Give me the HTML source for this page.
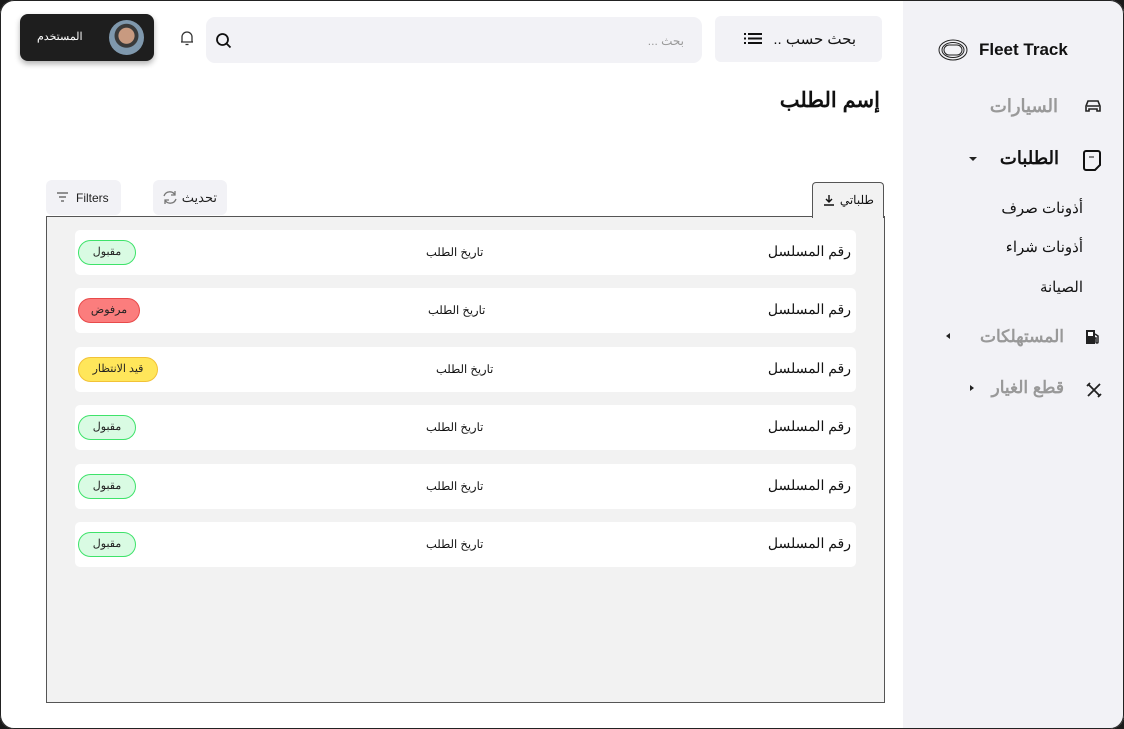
<!DOCTYPE html>
<html><head><meta charset="utf-8"><style>
*{box-sizing:border-box;margin:0;padding:0}
body{width:1124px;height:729px;background:#1a1a1a;font-family:"Liberation Sans","Noto Sans CJK SC",sans-serif;position:relative;overflow:hidden}
.frame{position:absolute;left:0;top:0;width:1124px;height:729px;background:#fff;border-radius:14px;overflow:hidden}
.edge{position:absolute;left:0;top:0;width:1124px;height:729px;border:1px solid #222;border-radius:14px;pointer-events:none;z-index:9}
.side{position:absolute;left:903px;top:0;width:221px;height:729px;background:#f2f2f6}
.abs{position:absolute}
.ar{direction:rtl;white-space:nowrap}
.row{position:absolute;left:75px;width:781px;height:45px;background:#fff;border-radius:5px}
.row .a{position:absolute;right:5px;top:13px;font-size:14px;color:#111;direction:rtl}
.row .b{position:absolute;top:15px;font-size:11.5px;color:#111;direction:rtl}
.pill{position:absolute;left:3px;top:10px;height:25px;border-radius:13px;font-size:11px;color:#222;text-align:center;line-height:23px;direction:rtl}
.g{background:#d9fbe3;border:1.5px solid #3ee36a;width:58px}
.r{background:#fb7d7d;border:1.5px solid #e84a4a;width:62px}
.y{background:#ffe65a;border:1.5px solid #f2c237;width:80px}
</style></head><body><div class="frame">
<div class="side">
 <svg class="abs" style="left:34px;top:38px" width="32" height="24" viewBox="0 0 32 24" fill="none" stroke="#222" stroke-width="1"><ellipse cx="16" cy="12" rx="14" ry="10"/><ellipse cx="16" cy="12" rx="11" ry="7.5"/><rect x="7" y="7" width="18" height="10" rx="5"/></svg>
 <div class="abs" style="left:76px;top:40px;font-size:17px;font-weight:bold;color:#111">Fleet Track</div>
 <div class="abs ar" style="right:66px;top:96px;font-size:18px;font-weight:bold;color:#999">السيارات</div>
 <svg class="abs" style="left:182px;top:99px" width="16" height="14" viewBox="0 0 16 14"><path d="M3 2h10l2 5v5h-3v-2H4v2H1V7z" fill="none" stroke="#222" stroke-width="1.6"/><path d="M2 7h12" stroke="#222" stroke-width="1.6"/></svg>
 <div class="abs ar" style="right:65px;top:148px;font-size:18px;font-weight:bold;color:#111">الطلبات</div>
 <div class="abs" style="left:66px;top:157px;border-left:4px solid transparent;border-right:4px solid transparent;border-top:4px solid #222"></div>
 <svg class="abs" style="left:180px;top:149px" width="18" height="22" viewBox="0 0 18 22"><path d="M3 2h12a2 2 0 0 1 2 2v12l-5 5H3a2 2 0 0 1-2-2V4a2 2 0 0 1 2-2z" fill="none" stroke="#111" stroke-width="2"/><path d="M6 8h5" stroke="#111" stroke-width="1"/></svg>
 <div class="abs ar" style="right:41px;top:199px;font-size:15px;color:#111">أذونات صرف</div>
 <div class="abs ar" style="right:41px;top:238px;font-size:15px;color:#111">أذونات شراء</div>
 <div class="abs ar" style="right:41px;top:278px;font-size:15px;color:#111">الصيانة</div>
 <div class="abs ar" style="right:60px;top:327px;font-size:17px;font-weight:bold;color:#999">المستهلكات</div>
 <div class="abs" style="left:43px;top:333px;border-top:3px solid transparent;border-bottom:3px solid transparent;border-right:4px solid #222"></div>
 <svg class="abs" style="left:182px;top:329px" width="16" height="16" viewBox="0 0 16 16"><rect x="1" y="1" width="9" height="14" fill="#222"/><rect x="3" y="3" width="5" height="4" fill="#fff"/><path d="M10 5l3 2v6a1 1 0 0 1-2 0V9h-1" fill="none" stroke="#222" stroke-width="1.5"/></svg>
 <div class="abs ar" style="right:60px;top:378px;font-size:17px;font-weight:bold;color:#999">قطع الغيار</div>
 <div class="abs" style="left:67px;top:385px;border-top:3px solid transparent;border-bottom:3px solid transparent;border-left:4px solid #222"></div>
 <svg class="abs" style="left:183px;top:382px" width="16" height="16" viewBox="0 0 16 16" stroke="#222" stroke-width="1.8" fill="none"><path d="M2 14L14 2M2 2l12 12M1 4l3-3M12 15l3-3"/></svg>
</div>

<div class="abs" style="left:20px;top:14px;width:134px;height:47px;background:#1e1e1e;border-radius:8px;box-shadow:0 3px 6px rgba(0,0,0,.3)">
 <div class="abs ar" style="left:17px;top:16px;font-size:11px;color:#fff">المستخدم</div>
 <div class="abs" style="left:89px;top:6px;width:35px;height:35px;border-radius:50%;background:radial-gradient(circle at 50% 45%,#c89a80 0 30%,#3a3a3a 32% 45%,#7f98ad 47%)"></div>
</div>
<svg class="abs" style="left:178px;top:29px" width="18" height="18" viewBox="0 0 18 18" fill="none" stroke="#333" stroke-width="1.3"><path d="M4 13V8a5 5 0 0 1 10 0v5H4zM3 13h12M7.5 15.5h3"/></svg>
<div class="abs" style="left:206px;top:17px;width:496px;height:46px;background:#f2f2f6;border-radius:9px">
 <svg class="abs" style="left:9px;top:15px" width="18" height="18" viewBox="0 0 18 18" fill="none" stroke="#111" stroke-width="1.8"><circle cx="7.5" cy="7.5" r="5.5"/><path d="M11.5 11.5l4 4"/></svg>
 <div class="abs ar" style="right:18px;top:17px;font-size:12px;color:#999">بحث ...</div>
</div>
<div class="abs" style="left:715px;top:16px;width:167px;height:46px;background:#f2f2f6;border-radius:6px">
 <div class="abs ar" style="right:26px;top:14px;font-size:15px;color:#111">بحث حسب ..</div>
 <svg class="abs" style="left:29px;top:16px" width="18" height="13" viewBox="0 0 18 13" fill="#111"><rect x="0" y="1" width="2" height="2"/><rect x="0" y="5.5" width="2" height="2"/><rect x="0" y="10" width="2" height="2"/><rect x="4" y="1" width="14" height="2"/><rect x="4" y="5.5" width="14" height="2"/><rect x="4" y="10" width="14" height="2"/></svg>
</div>
<div class="abs ar" style="right:244px;top:88px;font-size:21px;font-weight:bold;color:#111">إسم الطلب</div>

<div class="abs" style="left:46px;top:180px;width:75px;height:35px;background:#f2f2f6;border-radius:6px">
 <svg class="abs" style="left:10px;top:12px" width="13" height="11" viewBox="0 0 13 11" stroke="#555" stroke-width="1.2"><path d="M1 1h11M3 5h7M5 9h3"/></svg>
 <div class="abs" style="left:30px;top:11px;font-size:12px;color:#222">Filters</div>
</div>
<div class="abs" style="left:153px;top:180px;width:74px;height:35px;background:#f2f2f6;border-radius:6px">
 <svg class="abs" style="left:9px;top:10px" width="16" height="15" viewBox="0 0 16 15" fill="none" stroke="#777" stroke-width="1.3"><path d="M13 5a6 6 0 0 0-11 1M3 10a6 6 0 0 0 11-1M13 1v4H9M3 14v-4h4"/></svg>
 <div class="abs ar" style="right:10px;top:10px;font-size:13px;color:#222">تحديث</div>
</div>
<div class="abs" style="left:812px;top:182px;width:72px;height:36px;background:#f2f2f2;border:1px solid #555;border-bottom:none;border-radius:4px 4px 0 0;z-index:2">
 <div class="abs ar" style="right:9px;top:10px;font-size:12px;color:#111">طلباتي</div>
 <svg class="abs" style="left:10px;top:11px" width="12" height="12" viewBox="0 0 12 12" fill="none" stroke="#111" stroke-width="1.4"><path d="M6 1v7M3 5l3 3 3-3M1 11h10"/></svg>
</div>
<div class="abs" style="left:46px;top:216px;width:839px;height:487px;background:#f2f2f2;border:1px solid #555">
</div>
<div class="row" style="top:230px"><div class="a">رقم المسلسل</div><div class="b" style="left:351px">تاريخ الطلب</div><div class="pill g">مقبول</div></div>
<div class="row" style="top:288px"><div class="a">رقم المسلسل</div><div class="b" style="left:353px">تاريخ الطلب</div><div class="pill r">مرفوض</div></div>
<div class="row" style="top:347px"><div class="a">رقم المسلسل</div><div class="b" style="left:361px">تاريخ الطلب</div><div class="pill y">قيد الانتظار</div></div>
<div class="row" style="top:405px"><div class="a">رقم المسلسل</div><div class="b" style="left:351px">تاريخ الطلب</div><div class="pill g">مقبول</div></div>
<div class="row" style="top:464px"><div class="a">رقم المسلسل</div><div class="b" style="left:351px">تاريخ الطلب</div><div class="pill g">مقبول</div></div>
<div class="row" style="top:522px"><div class="a">رقم المسلسل</div><div class="b" style="left:351px">تاريخ الطلب</div><div class="pill g">مقبول</div></div>
</div><div class="edge"></div></body></html>
